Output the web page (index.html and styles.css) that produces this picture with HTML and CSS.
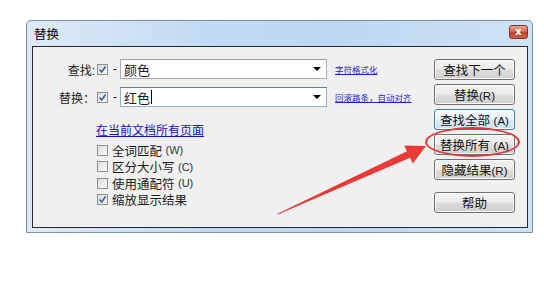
FILE: index.html
```html
<!DOCTYPE html>
<html lang="zh-CN">
<head>
    <meta charset="UTF-8">
    <title>替换</title>
    <link rel="stylesheet" href="styles.css">
</head>
<body>

    <div class="window">
        <div class="titlebar">
            <span class="title">替换</span>
            <span class="close">x</span>
        </div>
        <div class="panel">
            <div class="form">
                <div class="field">
                    <span class="field-label">查找:</span>
                    <span class="check checked"><svg viewBox="0 0 9 9"><path d="M1.5 4.5 L3.7 7 L7.6 1.5"/></svg></span>
                    <span class="dash">-</span>
                    <div class="combo">
                        <span class="combo-text">颜色</span>
                        <span class="combo-arrow"></span>
                    </div>
                    <a class="mini-link" href="#">字符格式化</a>
                </div>
                <div class="field">
                    <span class="field-label">替换：</span>
                    <span class="check checked"><svg viewBox="0 0 9 9"><path d="M1.5 4.5 L3.7 7 L7.6 1.5"/></svg></span>
                    <span class="dash">-</span>
                    <div class="combo focused">
                        <span class="combo-text">红色<span class="caret"></span></span>
                        <span class="combo-arrow"></span>
                    </div>
                    <a class="mini-link" href="#">回滚路条，自动对齐</a>
                </div>

                <a class="scope-link" href="#">在当前文档所有页面</a>

                <ul class="options">
                    <li><span class="check"></span>全词匹配 <span class="key">(W)</span></li>
                    <li><span class="check"></span>区分大小写 <span class="key">(C)</span></li>
                    <li><span class="check"></span>使用通配符 <span class="key">(U)</span></li>
                    <li><span class="check checked"><svg viewBox="0 0 9 9"><path d="M1.5 4.5 L3.7 7 L7.6 1.5"/></svg></span>缩放显示结果</li>
                </ul>
            </div>

            <div class="buttons">
                <button class="btn">查找下一个</button>
                <button class="btn">替换<span class="key">(R)</span></button>
                <button class="btn default">查找全部 <span class="key">(A)</span></button>
                <button class="btn">替换所有 <span class="key">(A)</span></button>
                <button class="btn">隐藏结果<span class="key">(R)</span></button>
                <button class="btn help">帮助</button>
            </div>
        </div>
    </div>

    <!-- annotation drawn on top of the screenshot -->
    <div class="mark-ellipse"></div>
    <svg class="mark-arrow" width="544" height="283" viewBox="0 0 544 283">
        <polygon points="277.8,214.6 410,157.7 412.8,163.5 426,146 404.2,145.5 407,151.3 277.4,213.8"/>
    </svg>

</body>
</html>
```

FILE: styles.css
```css
* {
    margin: 0;
    padding: 0;
    box-sizing: border-box;
}
body {
    background: #fff;
    width: 544px;
    height: 283px;
    font-family: "Liberation Sans", "Noto Sans CJK SC", sans-serif;
    font-size: 12px;
    color: #1b1b1b;
    position: relative;
    overflow: hidden;
}
.window {
    margin: 20px 0 0 26px;
    width: 507px;
    height: 213px;
    border: 1px solid #7d8fa3;
    border-radius: 5px 5px 0 0;
    background: linear-gradient(90deg, #dfeaf6 0%, #c2dbf4 35%, #bcd7f3 60%, #cfe2f5 100%);
    display: flex;
    flex-direction: column;
    padding: 0 4px 4px 5px;
}
.titlebar {
    height: 25px;
    display: flex;
    align-items: center;
    justify-content: space-between;
    padding: 0 0 0 2px;
}
.title {
    font-size: 12.5px;
    color: #000;
}
.close {
    width: 19px;
    height: 14px;
    margin-top: -3px;
    border: 1px solid #83312a;
    border-radius: 3px;
    background: linear-gradient(#e7a595 0%, #d66a55 45%, #c2412d 55%, #d0614b 100%);
    color: #fff;
    font-family: "DejaVu Sans", sans-serif;
    font-weight: bold;
    font-size: 10px;
    line-height: 11px;
    text-align: center;
}
.panel {
    flex: 1;
    background: #f0f0f0;
    border: 1px solid #1f2a36;
    display: flex;
    justify-content: space-between;
    padding: 12px 12px 0 0;
}
.form {
    display: flex;
    flex-direction: column;
}
.field {
    display: flex;
    align-items: center;
    height: 20px;
    margin-bottom: 8px;
}
.field-label {
    width: 62px;
    text-align: right;
    white-space: nowrap;
}
.check {
    width: 11px;
    height: 11px;
    border: 1px solid #8e8f8f;
    background: linear-gradient(135deg, #dcdcdc, #fbfbfb);
    display: inline-flex;
    flex-shrink: 0;
}
.field .check {
    margin-left: 2px;
}
.check svg {
    width: 9px;
    height: 9px;
    fill: none;
    stroke: #3c5da0;
    stroke-width: 1.6;
}
.dash {
    margin: 0 3px 0 5px;
}
.combo {
    width: 207px;
    height: 20px;
    background: #fff;
    border: 1px solid #abadb3;
    border-top-color: #9a9ca1;
    display: flex;
    align-items: center;
    justify-content: space-between;
    padding: 0 5px 0 3px;
    font-size: 13px;
}
.combo.focused {
    border-color: #8db2d6;
    border-top-color: #5b7fa3;
}
.combo-text {
    display: flex;
    align-items: center;
}
.caret {
    width: 1px;
    height: 14px;
    background: #000;
    margin-left: 1px;
}
.combo-arrow {
    width: 0;
    height: 0;
    border-left: 4px solid transparent;
    border-right: 4px solid transparent;
    border-top: 4px solid #000;
}
.mini-link {
    margin-left: 8px;
    font-size: 8.5px;
    color: #1f1fd8;
    text-decoration: underline;
    white-space: nowrap;
}
.scope-link {
    margin: 9px 0 0 63px;
    color: #1212d0;
    text-decoration: underline;
    line-height: 14px;
}
.options {
    list-style: none;
    margin: 4px 0 0 64px;
}
.options li {
    display: flex;
    align-items: center;
    height: 16.5px;
    white-space: pre;
    font-size: 12.5px;
}
.options .check {
    margin-right: 4px;
}
.key {
    font-size: 11px;
    color: #333;
}
.buttons {
    width: 81px;
    display: flex;
    flex-direction: column;
    gap: 4px;
}
.btn {
    height: 21px;
    border: 1px solid #707070;
    border-radius: 3px;
    background: linear-gradient(#f2f2f2 0%, #ebebeb 48%, #dddddd 52%, #cfcfcf 100%);
    font-family: inherit;
    font-size: 12.5px;
    color: #111;
    box-shadow: inset 0 0 0 1px #fbfbfb;
}
.btn .key {
    font-size: 11.5px;
    color: #111;
}
.btn.default {
    border-color: #3c7fb1;
    background: linear-gradient(#f4f9fd 0%, #eaf3fa 48%, #dbe9f4 52%, #cfe1ef 100%);
}
.btn.help {
    margin-top: 8px;
}
.mark-ellipse {
    position: absolute;
    left: 425px;
    top: 127px;
    width: 95px;
    height: 30px;
    border: 2px solid #e2383a;
    border-radius: 50%;
}
.mark-arrow {
    position: absolute;
    left: 0;
    top: 0;
}
.mark-arrow polygon {
    fill: #ea3a36;
}
```
